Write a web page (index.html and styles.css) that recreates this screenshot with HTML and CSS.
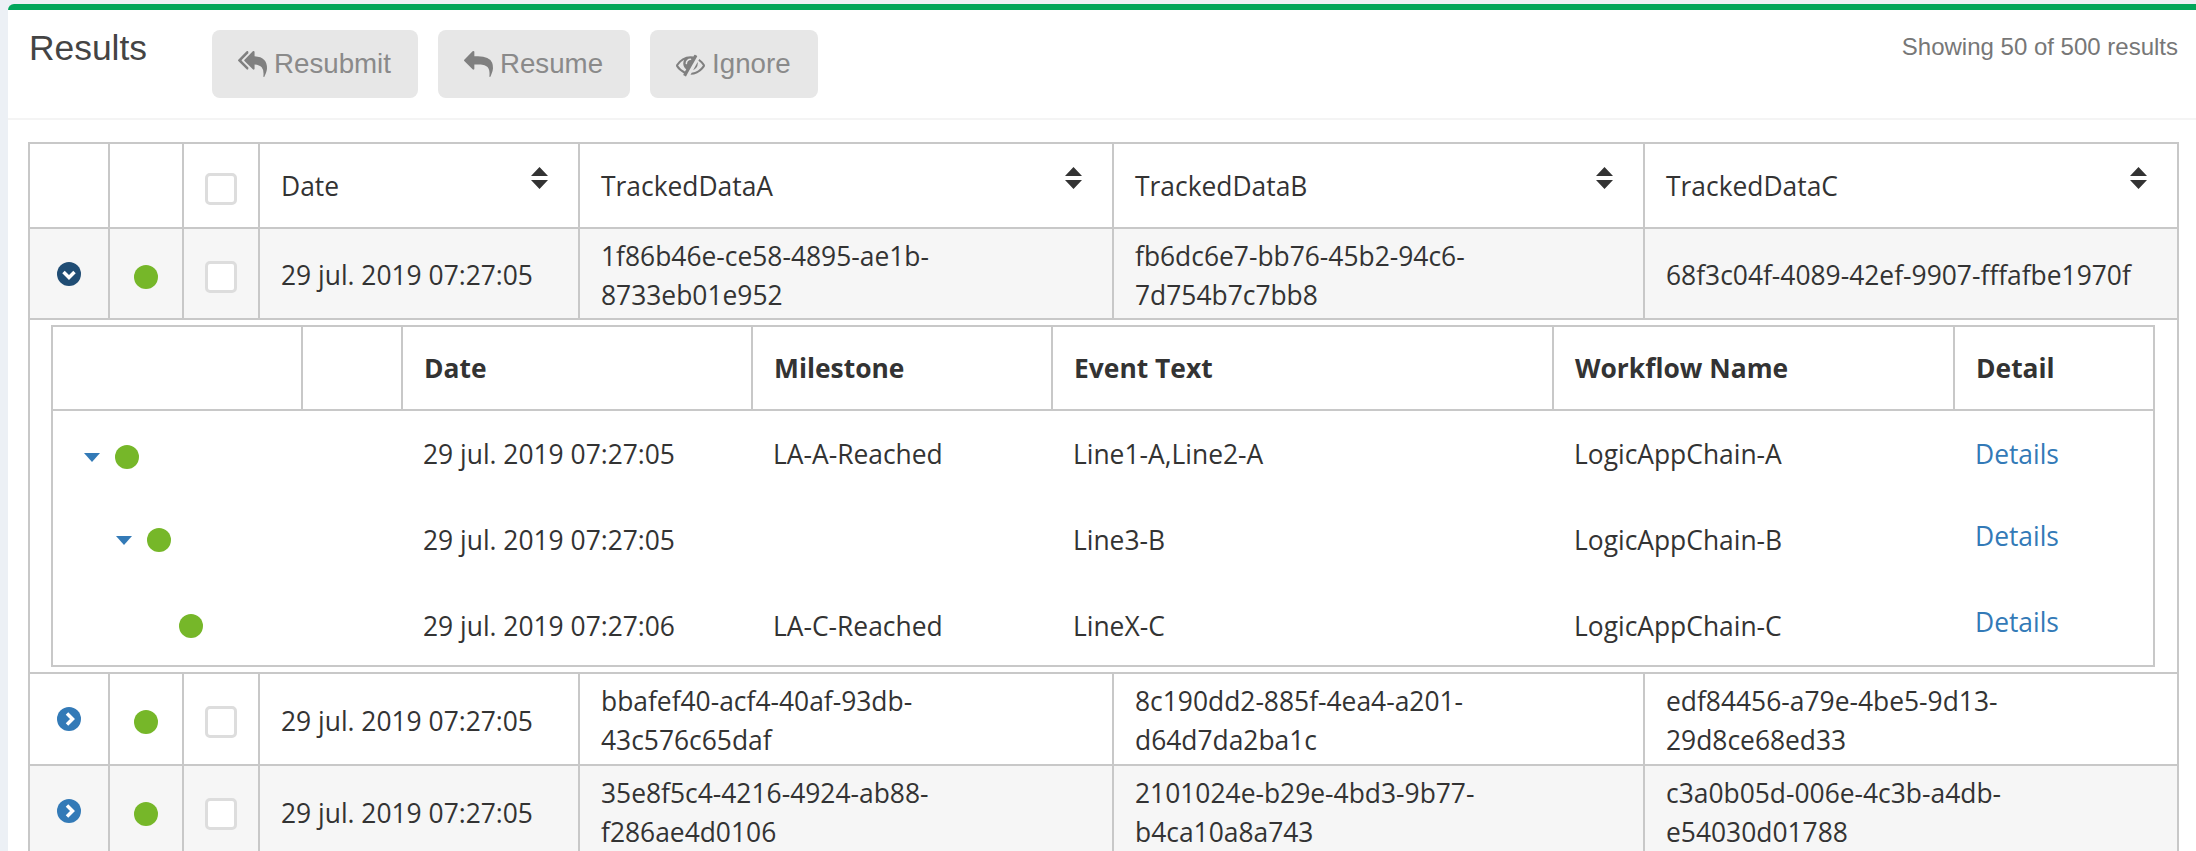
FILE: index.html
```html
<!DOCTYPE html>
<html lang="en">
<head>
<meta charset="utf-8">
<title>Results</title>
<link rel="stylesheet" href="styles.css">
</head>
<body>
<section class="panel">
  <header class="panel-head">
    <h3 class="title">Results</h3>
    <div class="actions">
      <button class="btn" type="button"><svg class="btn-icon" viewBox="0 0 1792 1792"><path d="M640 1082v70q0 42-39 59-13 5-25 5-27 0-45-19l-512-512q-19-19-19-45t19-45l512-512q29-31 70-14 39 17 39 59v69l-397 398q-19 19-19 45t19 45zm1152 38q0 58-17 133.5t-38.5 138-48 125-40.5 90.5l-20 40q-8 17-28 17-6 0-9-1-25-8-23-34 43-400-106-565-64-71-170.5-110.5t-267.5-52.5v251q0 42-39 59-13 5-25 5-27 0-45-19l-512-512q-19-19-19-45t19-45l512-512q29-31 70-14 39 17 39 59v262q411 28 599 221 169 173 169 509z"/></svg>Resubmit</button>
      <button class="btn" type="button"><svg class="btn-icon" viewBox="0 0 1792 1792"><path d="M1792 1120q0 166-127 451-3 7-10.500 24t-13.500 30-13 22q-12 17-28 17-15 0-23.500-10t-8.500-25q0-9 2.500-26.500t2.500-23.500q5-68 5-123 0-101-17.500-181t-48.500-138.500-80-101-105.500-69.500-133-42.500-154-21.500-175.500-6h-224v256q0 26-19 45t-45 19-45-19l-512-512q-19-19-19-45t19-45l512-512q19-19 45-19t45 19 19 45v256h224q713 0 875 403 53 134 53 333z"/></svg>Resume</button>
      <button class="btn" type="button"><svg class="btn-icon" viewBox="0 0 1792 1792"><path d="M555 1335l78-141q-87-63-136-159t-49-203q0-121 61-225-229 117-381 353 167 258 427 375zm389-759q0-20-14-34t-34-14q-125 0-214.500 89.500t-89.500 214.500q0 20 14 34t34 14 34-14 14-34q0-86 61-147t147-61q20 0 34-14t14-34zm363-191q0 7-1 9-106 189-316 567t-315 566l-49 89q-10 16-28 16-12 0-134-70-16-10-16-28 0-12 44-87-143-65-263.500-173t-208.500-245q-20-31-20-69t20-69q153-235 380-371t496-136q89 0 180 17l54-97q10-16 28-16 5 0 18 6t31 15.500 33 18.500 31.500 18.500 19.500 11.500q16 10 16 27zm37 447q0 139-79 253.500t-209 164.500l280-502q8 45 8 84zm448 128q0 35-20 69-39 64-109 145-150 172-347.500 267t-419.500 95l74-132q212-18 392.500-137t301.500-307q-115-179-282-294l63-112q95 64 182.500 153t144.500 184q20 34 20 69z"/></svg>Ignore</button>
    </div>
    <p class="count">Showing 50 of 500 results</p>
  </header>
  <div class="panel-body">
    <table class="grid">
      <colgroup>
        <col class="c-a"><col class="c-b"><col class="c-c"><col class="c-d"><col class="c-e"><col class="c-f"><col class="c-g">
      </colgroup>
      <thead>
        <tr class="head-row">
          <th></th>
          <th></th>
          <th><span class="check"></span></th>
          <th><div class="sort-head"><span class="sort-label">Date</span><svg class="sort" viewBox="0 0 17 22"><path d="M8.500 0L17 9H0zM0 13h17l-8.500 9z"/></svg></div></th>
          <th><div class="sort-head"><span class="sort-label">TrackedDataA</span><svg class="sort" viewBox="0 0 17 22"><path d="M8.500 0L17 9H0zM0 13h17l-8.500 9z"/></svg></div></th>
          <th><div class="sort-head"><span class="sort-label">TrackedDataB</span><svg class="sort" viewBox="0 0 17 22"><path d="M8.500 0L17 9H0zM0 13h17l-8.500 9z"/></svg></div></th>
          <th><div class="sort-head"><span class="sort-label">TrackedDataC</span><svg class="sort" viewBox="0 0 17 22"><path d="M8.500 0L17 9H0zM0 13h17l-8.500 9z"/></svg></div></th>
        </tr>
      </thead>
      <tbody>
        <tr class="row row-open zebra">
          <td class="mid"><svg class="toggle toggle-dark" viewBox="0 0 24 24"><circle cx="12" cy="12" r="12"/><path class="chev" d="M6.500 10l5.500 5.500 5.500-5.500"/></svg></td>
          <td class="mid"><span class="dot dot-row"></span></td>
          <td class="mid"><span class="check"></span></td>
          <td>29 jul. 2019 07:27:05</td>
          <td>1f86b46e-ce58-4895-ae1b-8733eb01e952</td>
          <td>fb6dc6e7-bb76-45b2-94c6-7d754b7c7bb8</td>
          <td>68f3c04f-4089-42ef-9907-fffafbe1970f</td>
        </tr>
        <tr class="detail-row">
          <td class="detail-cell" colspan="7">
            <table class="nested">
              <colgroup>
                <col class="n-a"><col class="n-b"><col class="n-c"><col class="n-d"><col class="n-e"><col class="n-f"><col class="n-g">
              </colgroup>
              <thead>
                <tr class="nested-head">
                  <th></th><th></th><th>Date</th><th>Milestone</th><th>Event Text</th><th>Workflow Name</th><th>Detail</th>
                </tr>
              </thead>
              <tbody>
                <tr>
                  <td colspan="2"><div class="tree lvl-1 tree-low"><span class="caret"></span><span class="dot"></span></div></td>
                  <td>29 jul. 2019 07:27:05</td><td>LA-A-Reached</td><td>Line1-A,Line2-A</td><td>LogicAppChain-A</td><td><a class="link" href="#">Details</a></td>
                </tr>
                <tr>
                  <td colspan="2"><div class="tree lvl-2"><span class="caret"></span><span class="dot"></span></div></td>
                  <td>29 jul. 2019 07:27:05</td><td></td><td>Line3-B</td><td>LogicAppChain-B</td><td class="cell-up"><a class="link" href="#">Details</a></td>
                </tr>
                <tr class="nested-last">
                  <td colspan="2"><div class="tree lvl-3"><span class="caret-gap"></span><span class="dot"></span></div></td>
                  <td>29 jul. 2019 07:27:06</td><td>LA-C-Reached</td><td>LineX-C</td><td>LogicAppChain-C</td><td class="cell-up"><a class="link" href="#">Details</a></td>
                </tr>
              </tbody>
            </table>
          </td>
        </tr>
        <tr class="row">
          <td class="mid"><svg class="toggle" viewBox="0 0 24 24"><circle cx="12" cy="12" r="12"/><path class="chev" d="M10 6.500l5.500 5.500-5.500 5.500"/></svg></td>
          <td class="mid"><span class="dot dot-row"></span></td>
          <td class="mid"><span class="check"></span></td>
          <td>29 jul. 2019 07:27:05</td>
          <td>bbafef40-acf4-40af-93db-43c576c65daf</td>
          <td>8c190dd2-885f-4ea4-a201-d64d7da2ba1c</td>
          <td>edf84456-a79e-4be5-9d13-29d8ce68ed33</td>
        </tr>
        <tr class="row zebra">
          <td class="mid"><svg class="toggle" viewBox="0 0 24 24"><circle cx="12" cy="12" r="12"/><path class="chev" d="M10 6.500l5.500 5.500-5.500 5.500"/></svg></td>
          <td class="mid"><span class="dot dot-row"></span></td>
          <td class="mid"><span class="check"></span></td>
          <td>29 jul. 2019 07:27:05</td>
          <td>35e8f5c4-4216-4924-ab88-f286ae4d0106</td>
          <td>2101024e-b29e-4bd3-9b77-b4ca10a8a743</td>
          <td>c3a0b05d-006e-4c3b-a4db-e54030d01788</td>
        </tr>
      </tbody>
    </table>
  </div>
</section>
</body>
</html>
```
FILE: styles.css
```css
* { box-sizing: border-box; }
html, body { height: 851px; overflow: hidden; }
body {
  margin: 0;
  padding: 4px 0 0 8px;
  background: #ecf0f5;
  font-family: "Open Sans", "Noto Sans", sans-serif;
  color: #333;
}
.panel {
  background: #fff;
  border-top: 6px solid #00a65a;
  border-top-left-radius: 6px;
  min-height: 900px;
}
.panel-head {
  display: flex;
  align-items: flex-start;
  height: 110px;
  padding: 20px 18px 0 21px;
  border-bottom: 2px solid #f4f4f4;
}
.title {
  margin: -5px 0 0;
  width: 118px;
  font: 400 35.400px/46px "Liberation Sans", Arial, sans-serif;
  color: #444;
}
.actions {
  display: flex;
  gap: 20px;
  margin-left: 65px;
}
.btn {
  display: flex;
  align-items: center;
  gap: 7px;
  height: 68px;
  padding: 0 27px 0 26px;
  border: 0;
  border-radius: 8px;
  background: #e7e7e7;
  color: #8a8a8a;
  font: 400 27.700px/1 "Liberation Sans", Arial, sans-serif;
}
.btn-icon {
  flex: none;
  width: 29px;
  height: 29px;
  fill: #808080;
}
.count {
  margin: 0 0 0 auto;
  font: 400 24px/34px "Liberation Sans", Arial, sans-serif;
  color: #777;
}
.panel-body { padding: 22px 18px 0 20px; }
.grid, .nested {
  border-collapse: collapse;
  table-layout: fixed;
}
.grid { width: 2149px; }
.c-a { width: 80px; }
.c-b { width: 74px; }
.c-c { width: 76px; }
.c-d { width: 320px; }
.c-e { width: 534px; }
.c-f { width: 531px; }
.c-g { width: 534px; }
.grid > thead > tr > th,
.grid > tbody > .row > td {
  border: 2px solid #c8c8c8;
  padding: 7px 45px 3px 21px;
  font-size: 26.400px;
  font-weight: 400;
  line-height: 39px;
  text-align: left;
  vertical-align: middle;
}
.grid > thead > tr > th { padding: 5px 21px; }
.head-row { height: 85px; }
.row { height: 92px; }
.row-open { height: 91px; }
.zebra { background: #f6f6f6; }
.grid > tbody > .row > .mid { padding: 0; text-align: center; }
.grid > thead > tr > th:nth-child(3) { padding: 0; text-align: center; }
.sort-head {
  display: flex;
  justify-content: space-between;
  align-items: flex-start;
  padding-right: 9px;
}
.sort-label { padding-top: 2px; }
.sort {
  flex: none;
  width: 17px;
  height: 22px;
  margin-top: 2px;
  fill: #333;
}
.toggle {
  display: block;
  width: 24px;
  height: 24px;
  margin: 0 auto;
  fill: #337ab7;
}
.toggle-dark { fill: #204d74; }
.chev {
  fill: none;
  stroke: #fff;
  stroke-width: 3.500;
}
.dot {
  display: block;
  flex: none;
  width: 24px;
  height: 24px;
  border-radius: 50%;
  background: #76b729;
}
.dot-row { margin: 6px auto 0; }
.check {
  display: block;
  width: 32px;
  height: 32px;
  margin: 6px auto 0;
  border: 3px solid #ddd;
  border-radius: 5px;
  background: #fff;
}
.detail-cell {
  border: 2px solid #c8c8c8;
  padding: 5px 21px 5px;
}
.nested { width: 2102px; border: 2px solid #c8c8c8; }
.n-a { width: 250px; }
.n-b { width: 100px; }
.n-c { width: 350px; }
.n-d { width: 300px; }
.n-e { width: 501px; }
.n-f { width: 401px; }
.n-g { width: 200px; }
.nested-head { height: 84px; }
.nested-head th {
  border: 2px solid #c8c8c8;
  padding: 0 21px;
  font-size: 26.400px;
  font-weight: 700;
  line-height: 40px;
  text-align: left;
}
.nested tbody td {
  padding: 23px 21px;
  font-size: 26.400px;
  line-height: 40px;
  vertical-align: top;
}
.nested .nested-last td { padding-bottom: 19px; }
.nested tbody td.cell-up { padding-top: 19px; }
.link {
  color: #337ab7;
  text-decoration: none;
}
.tree {
  display: flex;
  align-items: center;
  height: 40px;
  gap: 15px;
}
.nested tbody td:first-child { padding: 23px 0 0; }
.lvl-1 { padding-left: 31px; }
.lvl-2 { padding-left: 63px; }
.lvl-3 { padding-left: 95px; }
.tree-low { padding-top: 6px; }
.caret {
  flex: none;
  width: 0;
  height: 0;
  border-left: 8px solid transparent;
  border-right: 8px solid transparent;
  border-top: 9px solid #337ab7;
}
.caret-gap { flex: none; width: 16px; }
```
